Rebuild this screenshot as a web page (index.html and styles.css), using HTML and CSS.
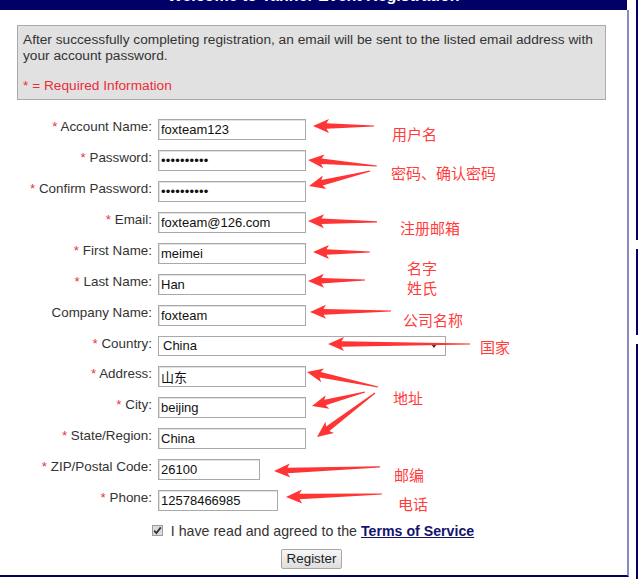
FILE: index.html
```html
<!DOCTYPE html>
<html lang="en">
<head>
<meta charset="utf-8">
<title>Event Registration</title>
<link rel="stylesheet" href="styles.css">
</head>
<body>
<div class="screen">
  <div class="frame">
    <div class="titlebar"><h1 class="title">Welcome to Tanner Event Registration</h1></div>
    <div class="panel">
      <div class="notice">
        <p class="notice-text">After successfully completing registration, an email will be sent to the listed email address with your account password.</p>
        <p class="notice-req">* = Required Information</p>
      </div>
      <form class="form">
        <label class="lbl"><span class="star">*</span> Account Name:</label>
        <input class="field" type="text" value="foxteam123">
        <label class="lbl"><span class="star">*</span> Password:</label>
        <input class="field field-pw" type="text" value="••••••••••">
        <label class="lbl"><span class="star">*</span> Confirm Password:</label>
        <input class="field field-pw" type="text" value="••••••••••">
        <label class="lbl"><span class="star">*</span> Email:</label>
        <input class="field" type="text" value="foxteam@126.com">
        <label class="lbl"><span class="star">*</span> First Name:</label>
        <input class="field" type="text" value="meimei">
        <label class="lbl"><span class="star">*</span> Last Name:</label>
        <input class="field" type="text" value="Han">
        <label class="lbl">Company Name:</label>
        <input class="field" type="text" value="foxteam">
        <label class="lbl"><span class="star">*</span> Country:</label>
        <div class="select-wrap"><select class="select"><option>China</option></select><span class="select-arrow"></span></div>
        <label class="lbl"><span class="star">*</span> Address:</label>
        <input class="field field-cjk" type="text" value="山东">
        <label class="lbl"><span class="star">*</span> City:</label>
        <input class="field" type="text" value="beijing">
        <label class="lbl"><span class="star">*</span> State/Region:</label>
        <input class="field" type="text" value="China">
        <label class="lbl"><span class="star">*</span> ZIP/Postal Code:</label>
        <input class="field field-zip" type="text" value="26100">
        <label class="lbl"><span class="star">*</span> Phone:</label>
        <input class="field field-phone" type="text" value="12578466985">
      </form>
      <div class="agree">
        <span class="check"><svg width="9" height="9" viewBox="0 0 9 9"><path d="M1.2 4.6 L3.4 7 L7.8 1.4" fill="none" stroke="#333" stroke-width="1.8"/></svg></span>
        <span class="agree-text">I have read and agreed to the <a class="tos" href="#">Terms of Service</a></span>
      </div>
      <div class="actions"><button class="btn" type="button">Register</button></div>
    </div>
  </div>
  <div class="edge">
    <span class="edge-seg seg1"></span>
    <span class="edge-seg seg2"></span>
    <span class="edge-seg seg3"></span>
  </div>

  <svg class="arrows" width="639" height="579" viewBox="0 0 639 579">
    <g fill="#ff3535">
      <polygon transform="translate(313 126) rotate(0)" points="0,0 16,-7 13.5,-2.8 61,-0.6 61,0.6 13.5,2.8 16,7"/>
      <polygon transform="translate(308 160) rotate(5)" points="0,0 16,-7 13.5,-2.8 69,-0.6 69,0.6 13.5,2.8 16,7"/>
      <polygon transform="translate(309 186) rotate(-13.8)" points="0,0 16,-7 13.5,-2.8 63,-0.6 63,0.6 13.5,2.8 16,7"/>
      <polygon transform="translate(308 221) rotate(0.8)" points="0,0 16,-7 13.5,-2.8 69,-0.6 69,0.6 13.5,2.8 16,7"/>
      <polygon transform="translate(313 252) rotate(0)" points="0,0 16,-7 13.5,-2.8 57,-0.6 57,0.6 13.5,2.8 16,7"/>
      <polygon transform="translate(308 281) rotate(-1)" points="0,0 16,-7 13.5,-2.8 57,-0.6 57,0.6 13.5,2.8 16,7"/>
      <polygon transform="translate(310 312) rotate(-0.7)" points="0,0 16,-7 13.5,-2.8 81,-0.6 81,0.6 13.5,2.8 16,7"/>
      <polygon transform="translate(328 344) rotate(0)" points="0,0 16,-7 13.5,-2.8 142,-0.6 142,0.6 13.5,2.8 16,7"/>
      <polygon transform="translate(307 372) rotate(11.9)" points="0,0 16,-7 13.5,-2.8 72.6,-0.6 72.6,0.6 13.5,2.8 16,7"/>
      <polygon transform="translate(312 406) rotate(-14.8)" points="0,0 16,-7 13.5,-2.8 54.8,-0.6 54.8,0.6 13.5,2.8 16,7"/>
      <polygon transform="translate(317 437) rotate(-37.2)" points="0,0 16,-7 13.5,-2.8 72.8,-0.6 72.8,0.6 13.5,2.8 16,7"/>
      <polygon transform="translate(274 471) rotate(-2.2)" points="0,0 16,-7 13.5,-2.8 106,-0.6 106,0.6 13.5,2.8 16,7"/>
      <polygon transform="translate(286 497) rotate(-1.8)" points="0,0 16,-7 13.5,-2.8 96,-0.6 96,0.6 13.5,2.8 16,7"/>
    </g>
  </svg>

  <div class="notes">
    <span class="note n-user">用户名</span>
    <span class="note n-pw">密码、确认密码</span>
    <span class="note n-mail">注册邮箱</span>
    <span class="note n-name">名字<br>姓氏</span>
    <span class="note n-co">公司名称</span>
    <span class="note n-country">国家</span>
    <span class="note n-addr">地址</span>
    <span class="note n-zip">邮编</span>
    <span class="note n-tel">电话</span>
  </div>
</div>
</body>
</html>
```

FILE: styles.css
```css
html, body {
  margin: 0;
  padding: 0;
  background: #ffffff;
}

.screen {
  position: relative;
  width: 639px;
  height: 579px;
  overflow: hidden;
  display: flex;
  align-items: flex-start;
  font-family: "Liberation Sans", Arial, sans-serif;
  font-size: 13.4px;
  color: #333333;
}

.frame {
  width: 629px;
  display: flex;
  flex-direction: column;
}

.titlebar {
  height: 10px;
  margin-right: 2px;
  background: #000066;
  overflow: hidden;
  text-align: center;
}

.title {
  margin: -13px 0 0 0;
  font-size: 16px;
  line-height: 18px;
  font-weight: bold;
  color: #ffffff;
}

.panel {
  box-sizing: border-box;
  height: 567px;
  border-right: 2px solid #8a8ac6;
  border-bottom: 2px solid #000066;
  padding-top: 15px;
}

.notice {
  box-sizing: border-box;
  width: 589px;
  margin-left: 17px;
  background: #e1e1e1;
  border: 1px solid #aaaaaa;
  padding: 6px 5px 5px 5px;
  font-size: 13.7px;
  line-height: 15.5px;
  color: #333333;
}

.notice-text {
  margin: 0;
}

.notice-req {
  margin: 15px 0 0 0;
  color: #ee2b3c;
}

.form {
  margin: 19px 0 0 0;
  display: grid;
  grid-template-columns: 152px auto;
  column-gap: 6px;
  row-gap: 10px;
  justify-items: start;
}

.lbl {
  justify-self: end;
  padding-top: 0;
  line-height: 16px;
  color: #333333;
  white-space: nowrap;
}

.star {
  color: #e8333f;
}

.field {
  box-sizing: border-box;
  width: 148px;
  height: 21px;
  margin: 0;
  padding: 0 0 0 2px;
  border: 1px solid #a9a9a9;
  box-shadow: inset 1px 1px 0 #e2e2e2;
  font-family: "Liberation Sans", Arial, sans-serif;
  font-size: 13px;
  color: #111111;
  background: #ffffff;
}

.field-pw {
  font-size: 13px;
  letter-spacing: 0.2px;
}

.field-cjk {
  font-family: "Liberation Sans", "Noto Sans CJK SC", sans-serif;
}

.field-zip {
  width: 102px;
}

.field-phone {
  width: 120px;
}

.select-wrap {
  position: relative;
  width: 288px;
  height: 20px;
}

.select {
  appearance: none;
  -webkit-appearance: none;
  box-sizing: border-box;
  width: 288px;
  height: 20px;
  margin: 0;
  padding: 0 0 0 4px;
  border: 1px solid #a9a9a9;
  border-radius: 0;
  background: #ffffff;
  font-family: "Liberation Sans", Arial, sans-serif;
  font-size: 13px;
  color: #111111;
}

.select-arrow {
  position: absolute;
  right: 9px;
  top: 8px;
  width: 0;
  height: 0;
  border-left: 3px solid transparent;
  border-right: 3px solid transparent;
  border-top: 4px solid #333333;
}

.agree {
  margin-top: 12px;
  display: flex;
  justify-content: center;
  align-items: center;
  gap: 8px;
  line-height: 16px;
  padding-right: 1px;
}

.check {
  box-sizing: border-box;
  width: 11px;
  height: 11px;
  border: 1px solid #9c9c9c;
  background: #dcdcdc;
  display: flex;
  align-items: center;
  justify-content: center;
}

.agree-text {
  font-size: 14.2px;
  color: #333333;
}

.tos {
  color: #14146e;
  font-weight: bold;
  text-decoration: underline;
}

.actions {
  margin-top: 10px;
  display: flex;
  justify-content: center;
  padding-right: 4px;
}

.btn {
  box-sizing: border-box;
  width: 61px;
  height: 20px;
  padding: 0;
  border: 1px solid #a7a7a7;
  border-radius: 2px;
  background: linear-gradient(#f6f6f6, #dedede);
  font-family: "Liberation Sans", Arial, sans-serif;
  font-size: 13.4px;
  color: #222222;
}

.edge {
  margin-left: 7px;
  width: 2px;
  height: 579px;
  display: flex;
  flex-direction: column;
}

.edge-seg {
  display: block;
  background: #000066;
}

.seg1 { height: 240px; }
.seg2 { height: 86px; margin-top: 9px; }
.seg3 { flex: 1; margin-top: 9px; }

.arrows {
  position: absolute;
  left: 0;
  top: 0;
  pointer-events: none;
}

.notes {
  position: absolute;
  left: 0;
  top: 0;
  width: 639px;
  height: 579px;
  pointer-events: none;
}

.note {
  position: absolute;
  font-family: "Noto Sans CJK SC", sans-serif;
  font-size: 15px;
  line-height: 20px;
  color: #ff3b3b;
  white-space: nowrap;
}

.n-user { left: 392px; top: 124px; }
.n-pw { left: 391px; top: 163px; }
.n-mail { left: 400px; top: 218px; }
.n-name { left: 407px; top: 258px; }
.n-co { left: 403px; top: 310px; }
.n-country { left: 480px; top: 337px; }
.n-addr { left: 393px; top: 388px; }
.n-zip { left: 394px; top: 465px; }
.n-tel { left: 398px; top: 494px; }
```
